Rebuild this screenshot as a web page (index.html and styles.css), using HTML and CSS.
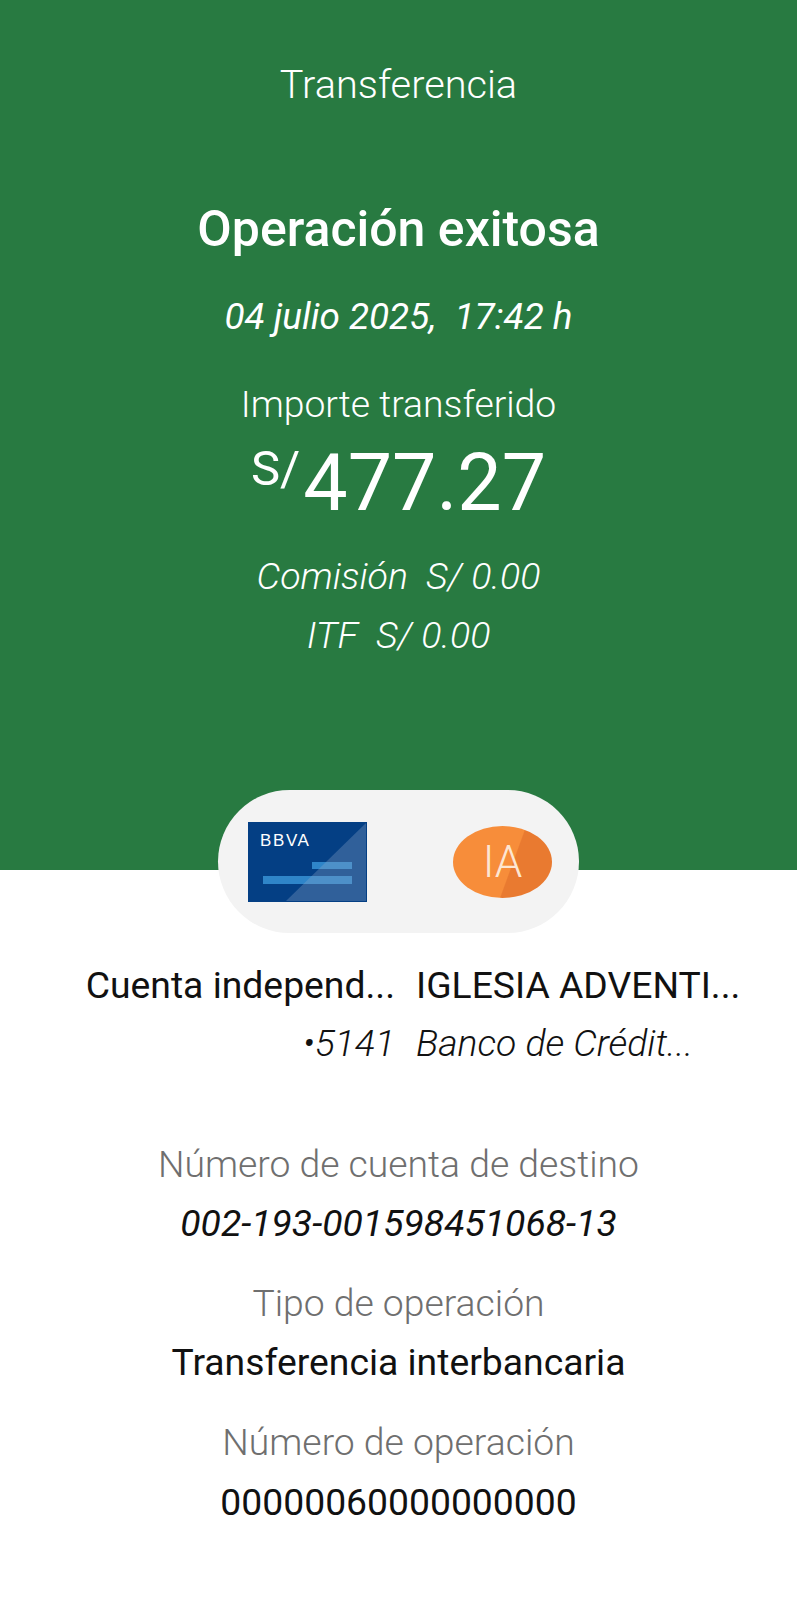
FILE: index.html
```html
<!DOCTYPE html>
<html lang="es">
<head>
<meta charset="utf-8">
<title>Transferencia</title>
<link rel="stylesheet" href="styles.css">
</head>
<body>
<header class="hero">
  <h1 class="title">Transferencia</h1>
  <h2 class="status">Operación exitosa</h2>
  <p class="date">04 julio 2025,&nbsp; 17:42 h</p>
  <p class="amount-label">Importe transferido</p>
  <p class="amount"><span class="currency">S/</span>477.27</p>
  <p class="fee fee-first">Comisión&nbsp; S/ 0.00</p>
  <p class="fee">ITF&nbsp; S/ 0.00</p>
</header>
<div class="pill-wrap">
  <div class="pill">
    <svg class="card" viewBox="0 0 119 80" aria-hidden="true">
      <rect width="119" height="80" fill="#043f84"/>
      <rect x="15" y="54" width="89" height="8" fill="#2f85c9"/>
      <rect x="64" y="40" width="40" height="7" fill="#2f85c9"/>
      <path d="M38 79 L118 1 V79 Z" fill="#8fa9c9" fill-opacity=".32"/>
      <text x="12" y="24" class="card-text">BBVA</text>
    </svg>
    <div class="avatar"><span class="avatar-text">IA</span></div>
  </div>
</div>
<section class="parties">
  <div class="party party-from">
    <p class="party-name">Cuenta independ...</p>
    <p class="party-sub">•5141</p>
  </div>
  <div class="party">
    <p class="party-name">IGLESIA ADVENTI...</p>
    <p class="party-sub">Banco de Crédit...</p>
  </div>
</section>
<section class="details">
  <p class="label">Número de cuenta de destino</p>
  <p class="value value-italic">002-193-001598451068-13</p>
  <p class="label">Tipo de operación</p>
  <p class="value">Transferencia interbancaria</p>
  <p class="label">Número de operación</p>
  <p class="value">00000060000000000</p>
</section>
</body>
</html>
```
FILE: styles.css
```css
* { box-sizing: border-box; margin: 0; padding: 0; }
html, body { background: #fff; }
body {
  font-family: Roboto, "Liberation Sans", sans-serif;
  width: 797px;
  height: 1600px;
  overflow: hidden;
  text-align: center;
  color: #111;
}
.hero {
  background: #287a41;
  color: #fff;
  height: 870px;
  padding-top: 62px;
}
.title { font-size: 39.7px; font-weight: 300; line-height: 46px; }
.status { font-size: 50px; font-weight: 500; line-height: 52px; margin-top: 95px; }
.date { font-size: 36.9px; font-style: italic; line-height: 40px; margin-top: 42px; }
.amount-label { font-size: 37.3px; font-weight: 300; line-height: 44px; margin-top: 45px; }
.amount { font-size: 79px; font-weight: 400; line-height: 86px; margin-top: 14px; }
.currency { font-size: 49px; font-weight: 400; vertical-align: 25px; line-height: 0; margin-right: 3px; }
.fee { font-size: 37.5px; font-weight: 300; font-style: italic; line-height: 42px; margin-top: 17px; }
.fee-first { margin-top: 29px; }
.pill-wrap { display: flex; justify-content: center; margin-top: -80px; }
.pill {
  width: 361px;
  height: 143px;
  background: #f3f3f3;
  border-radius: 72px;
  display: flex;
  align-items: center;
  justify-content: space-between;
  padding: 0 27px 0 30px;
}
.card { width: 119px; height: 80px; display: block; margin-top: 1px; }
.card-text { font-family: "Liberation Sans", sans-serif; font-size: 17px; font-weight: 400; fill: #fff; letter-spacing: 1.6px; }
.avatar {
  width: 99px;
  height: 72px;
  border-radius: 50%;
  background: linear-gradient(110deg, #f78d3a 0 58%, #e97a30 59%);
  display: flex;
  align-items: center;
  justify-content: center;
}
.avatar-text { color: #fde6d2; font-size: 44px; font-weight: 300; }
.parties {
  display: grid;
  grid-template-columns: 395px 1fr;
  column-gap: 21px;
  margin-top: 30px;
}
.party { text-align: left; }
.party-from { text-align: right; }
.party-name { font-size: 37.3px; line-height: 44px; }
.party-sub { font-size: 37.3px; font-weight: 300; font-style: italic; line-height: 40px; margin-top: 16px; }
.details { margin-top: 79px; }
.label { font-size: 37.3px; font-weight: 300; color: #6f6f6f; line-height: 44px; margin-top: 36px; }
.label:first-child { margin-top: 0; }
.value { font-size: 37.3px; line-height: 44px; margin-top: 15px; }
.value:last-child { margin-top: 16px; }
.value-italic { font-style: italic; }
```
